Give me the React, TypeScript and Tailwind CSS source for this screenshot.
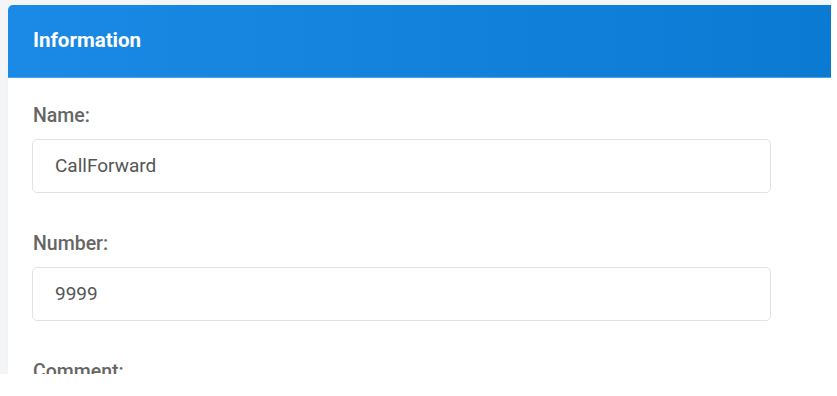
import React from "react"

const fields = [
  { label: "Name:", value: "CallForward" },
  { label: "Number:", value: "9999" },
  { label: "Comment:", value: "" },
]

export default function App() {
  return (
    <div className="w-[837px] h-[396px] bg-white font-['Roboto',sans-serif]">
      <div className="w-[831px] h-[374px] bg-[#f4f5f7] pt-[5px] pl-[8px] overflow-hidden">
        <div className="h-full bg-white rounded-tl-[5px] shadow-[0_0_1px_rgba(0,0,0,0.08)]">
          {/* Header */}
          <div className="h-[73px] flex items-center px-[25px] rounded-tl-[5px] bg-gradient-to-r from-[#1a8ae6] to-[#0b7ad3] border-b border-[#4aa3ea]">
            <h2 className="text-white font-bold text-[20.5px] leading-none -mt-[2px]">Information</h2>
          </div>

          {/* Form */}
          <div className="pl-[24px] pr-[60px] pt-[27px]">
            {fields.map((f) => (
              <div key={f.label} className="mb-[40px]">
                <label className="block text-[#666] font-medium text-[19.5px] leading-[21px] mb-[13px] pl-px">
                  {f.label}
                </label>
                <div className="h-[54px] flex items-center px-[22px] border border-[#e2e2e2] rounded-[5px] bg-white text-[#555] text-[19px]">
                  {f.value}
                </div>
              </div>
            ))}
          </div>
        </div>
      </div>
    </div>
  )
}
